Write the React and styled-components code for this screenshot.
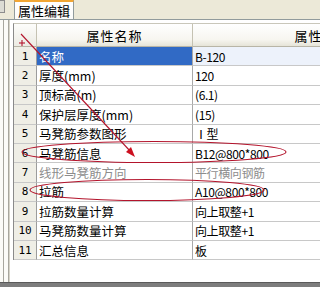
import React from "react";
import styled, { createGlobalStyle } from "styled-components";

const rows = [
  { name: "名称", value: "B-120", selected: true },
  { name: "厚度(mm)", value: "120" },
  { name: "顶标高(m)", value: "(6.1)" },
  { name: "保护层厚度(mm)", value: "(15)" },
  { name: "马凳筋参数图形", value: "Ⅰ型" },
  { name: "马凳筋信息", value: "B12@800*800" },
  { name: "线形马凳筋方向", value: "平行横向钢筋", disabled: true },
  { name: "拉筋", value: "A10@800*800" },
  { name: "拉筋数量计算", value: "向上取整+1" },
  { name: "马凳筋数量计算", value: "向上取整+1" },
  { name: "汇总信息", value: "板" },
];

function PropertyEditor() {
  return (
    <>
      <GlobalStyle />
      <Page>
        <TabStrip>
          <Stub />
          <Tab>属性编辑</Tab>
        </TabStrip>
        <Panel>
          <Frame>
            <FrameLine />
            <FrameLine />
          </Frame>
          <GridWrap>
            <Grid>
              <Corner />
              <HeadCell>属性名称</HeadCell>
              <HeadCell>属性值</HeadCell>
              {rows.map((r, i) => (
                <React.Fragment key={i}>
                  <NumCell>{i + 1}</NumCell>
                  <NameCell selected={r.selected} disabled={r.disabled}>
                    {r.name}
                  </NameCell>
                  <ValueCell active={r.selected} disabled={r.disabled}>
                    {r.value}
                  </ValueCell>
                </React.Fragment>
              ))}
            </Grid>
          </GridWrap>
        </Panel>
        <BottomBar />
        <Marks viewBox="0 0 320 287" width="320" height="287">
          <g stroke="#b3142c" strokeWidth="1.1" fill="none">
            <line x1="21" y1="34" x2="131" y2="152" />
            <line x1="22" y1="40" x2="22" y2="46" />
            <line x1="19" y1="43" x2="25" y2="43" />
            <ellipse cx="154" cy="152" rx="132" ry="10.5" />
            <ellipse cx="147" cy="190" rx="117" ry="10.5" />
          </g>
          <polygon points="135,157 126,152 131,147" fill="#cc1020" />
        </Marks>
      </Page>
    </>
  );
}

export default PropertyEditor;

const GlobalStyle = createGlobalStyle`
  body {
    margin: 0;
    background: #ffffff;
    font-family: "Noto Sans CJK SC", "DejaVu Sans", sans-serif;
  }
`;

const Page = styled.div`
  position: relative;
  width: 320px;
  height: 287px;
  overflow: hidden;
  display: flex;
  flex-direction: column;
  font-size: 12px;
  color: #000;
`;

const TabStrip = styled.div`
  height: 19px;
  flex: none;
  background: #ece9d8;
  border-bottom: 1px solid #919b9c;
  display: flex;
  align-items: flex-start;
`;

const Stub = styled.div`
  width: 4px;
  height: 11px;
  border: 1px solid #8c8c8c;
  border-left: none;
  background: #dcdcd4;
  margin-right: 9px;
`;

const Tab = styled.div`
  width: 55px;
  height: 17px;
  margin-bottom: -1px;
  border: 1px solid #919b9c;
  border-top: 2px solid #f2a633;
  border-bottom: none;
  background: linear-gradient(#ffffff, #fbfbf9);
  line-height: 17px;
  padding-left: 3px;
  font-size: 13px;
  white-space: nowrap;
`;

const Panel = styled.div`
  flex: 1;
  display: flex;
  background: #fbfbf7;
`;

const Frame = styled.div`
  width: 9px;
  flex: none;
  display: flex;
  gap: 4px;
  padding-left: 3px;
  box-sizing: border-box;
`;

const FrameLine = styled.div`
  width: 1px;
  background: #a7a69d;
`;

const GridWrap = styled.div`
  flex: 1;
  padding: 3px 0 0 3px;
  background: #ffffff;
  border-left: 1px solid #d6d4c8;
`;

const Grid = styled.div`
  display: grid;
  grid-template-columns: 23px 156px 246px;
  grid-template-rows: 23px repeat(11, 19.4px);
  border-left: 1px solid #8a8a8a;
  border-top: 1px solid #c9c7ba;
`;

const Corner = styled.div`
  background: linear-gradient(#fdfdfb, #ecebe3);
  border-right: 1px solid #c5c2b2;
  border-bottom: 1px solid #b8b5a6;
`;

const HeadCell = styled.div`
  background: linear-gradient(#ffffff 0%, #f7f6f0 70%, #e6e4d8 100%);
  border-right: 1px solid #c5c2b2;
  border-bottom: 1px solid #b8b5a6;
  display: flex;
  align-items: center;
  justify-content: center;
  font-size: 13px;
  letter-spacing: 1px;
`;

const NumCell = styled.div`
  background: #efeee6;
  border-right: 1px solid #9c9c9c;
  border-bottom: 1px solid #c8c8c8;
  display: flex;
  align-items: center;
  justify-content: center;
  font-family: "DejaVu Sans Mono", "Liberation Mono", monospace;
  font-size: 11px;
`;

const NameCell = styled.div`
  background: ${(p) => (p.selected ? "#316ac5" : "#ffffff")};
  color: ${(p) => (p.selected ? "#ffffff" : p.disabled ? "#8d8d8d" : "#000000")};
  border-right: 1px solid #a9a9a9;
  border-bottom: 1px solid #c8c8c8;
  padding-left: 2px;
  display: flex;
  align-items: center;
  white-space: nowrap;
  font-size: 12.5px;
`;

const ValueCell = styled.div`
  background: ${(p) => (p.active ? "#edf2fb" : "#ffffff")};
  color: ${(p) => (p.disabled ? "#8d8d8d" : "#000000")};
  border-bottom: 1px solid #c8c8c8;
  padding-left: 2px;
  display: flex;
  align-items: center;
  white-space: nowrap;
  font-size: 12px;
  letter-spacing: -0.4px;
`;

const BottomBar = styled.div`
  height: 4px;
  flex: none;
  background: #7d7d7d;
  border-top: 1px solid #5a5a5a;
`;

const Marks = styled.svg`
  position: absolute;
  left: 0;
  top: 0;
  pointer-events: none;
`;
